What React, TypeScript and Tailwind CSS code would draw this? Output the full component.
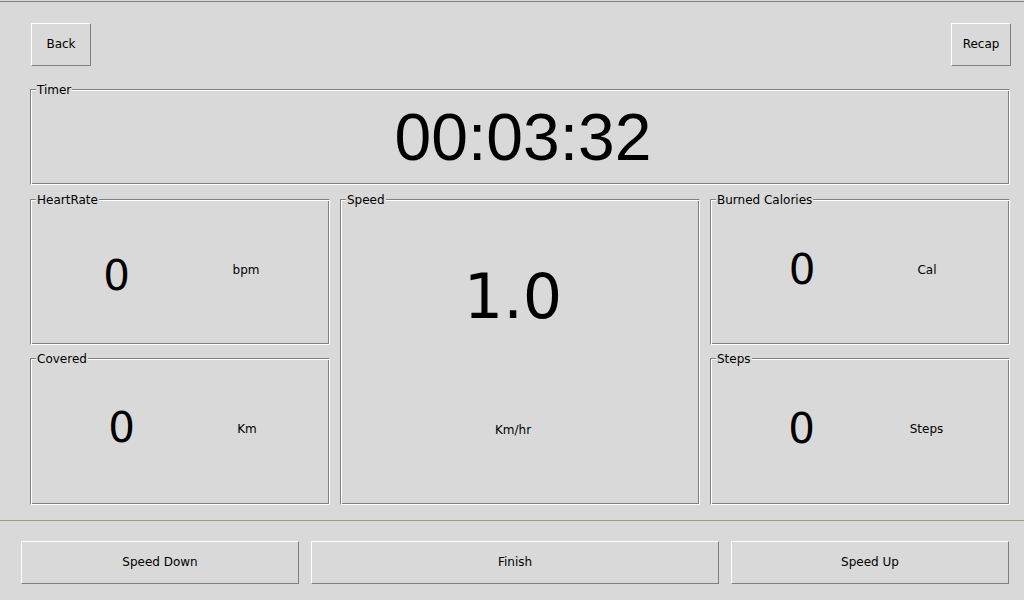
const groove =
  "relative border border-t-[#808080] border-l-[#808080] border-b-white border-r-white shadow-[inset_1px_1px_0_#ffffff,inset_-1px_-1px_0_#808080]";

const raised =
  "flex items-center justify-center pb-[2px] border border-t-white border-l-white border-b-[#808080] border-r-[#808080] text-[12px] text-black bg-[#d9d9d9]";

type FrameLabelProps = { text: string };

const FrameLabel = ({ text }: FrameLabelProps) => (
  <span className="absolute -top-[7px] left-[5px] bg-[#d9d9d9] px-[1px] text-[12px] leading-[14px] text-black">
    {text}
  </span>
);

type StatPanelProps = {
  label: string;
  value: string;
  unit: string;
  height: string;
  numWidth: string;
  unitWidth: string;
  numTop: string;
  unitTop: string;
};

const StatPanel = ({
  label,
  value,
  unit,
  height,
  numWidth,
  unitWidth,
  numTop,
  unitTop,
}: StatPanelProps) => {
  return (
    <div className={`${groove} ${height} w-[300px] flex flex-row items-start`}>
      <FrameLabel text={label} />
      <div
        className={`${numWidth} ${numTop} text-center text-[42px] leading-none text-black`}
      >
        {value}
      </div>
      <div
        className={`${unitWidth} ${unitTop} text-center text-[12px] leading-[14px] text-black`}
      >
        {unit}
      </div>
    </div>
  );
};

export default function App() {
  return (
    <div
      className="w-[1024px] h-[600px] bg-[#d9d9d9] overflow-hidden flex flex-col"
      style={{ fontFamily: '"DejaVu Sans", sans-serif' }}
    >
      <div className="mt-px h-px w-full bg-[#808080]" />

      <div className="mt-[21px] flex flex-row justify-between pl-[31px] pr-[13px]">
        <button className={`${raised} w-[60px] h-[43px]`}>Back</button>
        <button className={`${raised} w-[60px] h-[43px]`}>Recap</button>
      </div>

      <div
        className={`${groove} mt-[23px] ml-[30px] w-[980px] h-[96px] flex items-center justify-center pl-[6px]`}
      >
        <FrameLabel text="Timer" />
        <span
          className="text-[66px] leading-none text-black"
          style={{ fontFamily: '"Liberation Sans", Arial, sans-serif' }}
        >
          00:03:32
        </span>
      </div>

      <div className="mt-[14px] ml-[30px] flex flex-row gap-[10px]">
        <div className="flex flex-col gap-[13px]">
          <StatPanel
            label="HeartRate"
            value="0"
            unit="bpm"
            height="h-[146px]"
            numWidth="w-[171px]"
            unitWidth="w-[88px]"
            numTop="mt-[55px]"
            unitTop="mt-[63px]"
          />
          <StatPanel
            label="Covered"
            value="0"
            unit="Km"
            height="h-[147px]"
            numWidth="w-[181px]"
            unitWidth="w-[70px]"
            numTop="mt-[48px]"
            unitTop="mt-[63px]"
          />
        </div>

        <div
          className={`${groove} w-[360px] h-[306px] flex flex-col items-center pr-[14px]`}
        >
          <FrameLabel text="Speed" />
          <div className="mt-[66px] text-[62px] leading-none text-black">1.0</div>
          <div className="mt-[95px] text-[12px] leading-[14px] text-black">Km/hr</div>
        </div>

        <div className="flex flex-col gap-[13px]">
          <StatPanel
            label="Burned Calories"
            value="0"
            unit="Cal"
            height="h-[146px]"
            numWidth="w-[182px]"
            unitWidth="w-[68px]"
            numTop="mt-[49px]"
            unitTop="mt-[63px]"
          />
          <StatPanel
            label="Steps"
            value="0"
            unit="Steps"
            height="h-[147px]"
            numWidth="w-[181px]"
            unitWidth="w-[69px]"
            numTop="mt-[49px]"
            unitTop="mt-[63px]"
          />
        </div>
      </div>

      <div className="mt-[15px] h-px w-full bg-[#a39580]" />

      <div className="mt-[20px] pl-[21px] flex flex-row gap-[12px]">
        <button className={`${raised} w-[278px] h-[43px]`}>Speed Down</button>
        <button className={`${raised} w-[408px] h-[43px]`}>Finish</button>
        <button className={`${raised} w-[278px] h-[43px]`}>Speed Up</button>
      </div>
    </div>
  );
}
